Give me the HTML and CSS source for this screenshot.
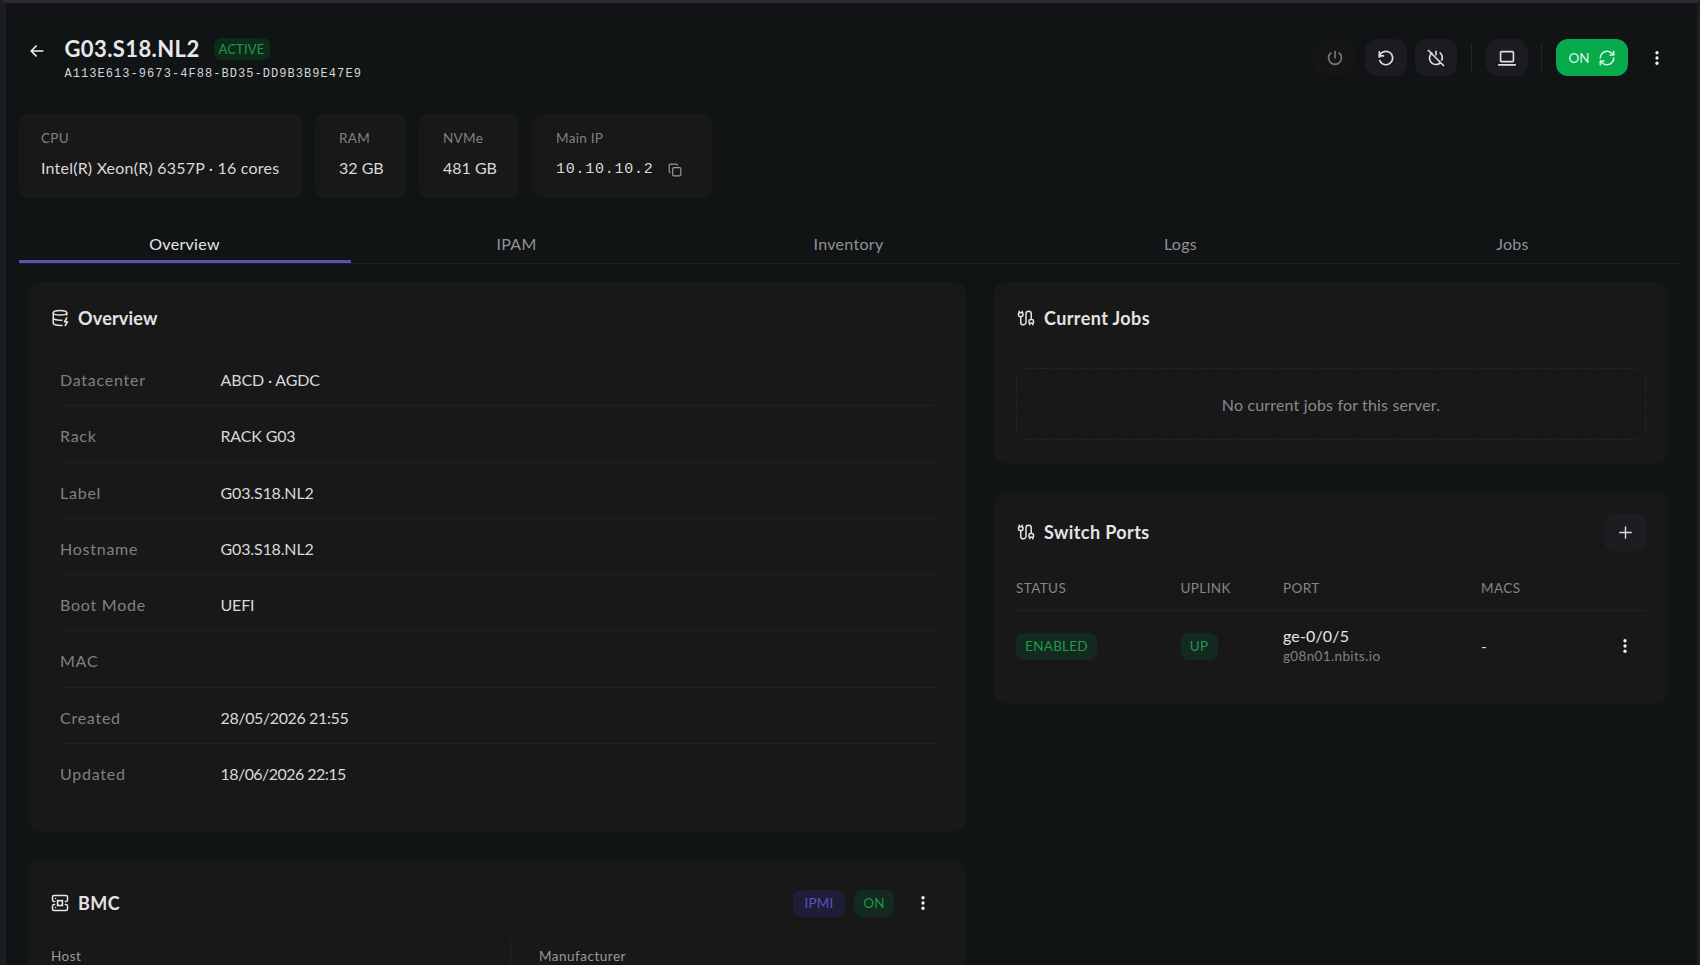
FILE: index.html
```html
<!DOCTYPE html>
<html lang="en">
<head>
<meta charset="utf-8">
<title>G03.S18.NL2</title>
<link rel="stylesheet" href="styles.css">
</head>
<body>
<svg class="sprite" aria-hidden="true">
  <symbol id="cable" viewBox="0 0 24 24"><path d="M17 19a1 1 0 0 1-1-1v-2a2 2 0 0 1 2-2h2a2 2 0 0 1 2 2v2a1 1 0 0 1-1 1zM17 21v-2M19 14V6.500a1 1 0 0 0-7 0v11a1 1 0 0 1-7 0V10M21 21v-2M3 5V3M4 10a2 2 0 0 1-2-2V6a1 1 0 0 1 1-1h4a1 1 0 0 1 1 1v2a2 2 0 0 1-2 2zM7 5V3"/></symbol>
  <symbol id="dots" viewBox="0 0 24 24"><g fill="currentColor" stroke="none"><circle cx="12" cy="5" r="2.200"/><circle cx="12" cy="12" r="2.200"/><circle cx="12" cy="19" r="2.200"/></g></symbol>
</svg>
<div class="page">
  <header class="header">
    <svg class="icon back" viewBox="0 0 24 24"><path d="M5 12h14M5 12l6 6M5 12l6-6"/></svg>
    <div class="heading">
      <div class="title-row"><h1 class="title">G03.S18.NL2</h1><span class="badge badge-active">ACTIVE</span></div>
      <div class="uuid">A113E613-9673-4F88-BD35-DD9B3B9E47E9</div>
    </div>
    <div class="actions">
      <button class="btn disabled"><svg class="icon" viewBox="0 0 24 24"><path d="M7 6a7.750 7.750 0 1 0 10 0M12 4v8"/></svg></button>
      <button class="btn"><svg class="icon" viewBox="0 0 24 24"><path d="M19.950 11a8 8 0 1 0-.5 4" transform="matrix(-1 0 0 1 24 0)"/><path d="M4 4.500v5h5"/></svg></button>
      <button class="btn"><svg class="icon" viewBox="0 0 24 24"><path d="M3 3l18 18M7 6a7.750 7.750 0 1 0 10 12M18.900 14.500A7.750 7.750 0 0 0 17 6M12 4v4"/></svg></button>
      <span class="divider"></span>
      <button class="btn"><svg class="icon laptop" viewBox="0 0 24 24"><path d="M3 19.500h18M5 6a1 1 0 0 1 1-1h12a1 1 0 0 1 1 1v9a1 1 0 0 1-1 1H6a1 1 0 0 1-1-1z"/></svg></button>
      <span class="divider"></span>
      <button class="btn btn-on"><span>ON</span><svg class="icon" viewBox="0 0 24 24"><path d="M3 12a9 9 0 0 1 9-9 9.750 9.750 0 0 1 6.740 2.740L21 8M21 3v5h-5M21 12a9 9 0 0 1-9 9 9.750 9.750 0 0 1-6.740-2.740L3 16M8 16H3v5"/></svg></button>
      <svg class="icon more"><use href="#dots"/></svg>
    </div>
  </header>

  <section class="stats">
    <div class="stat stat-cpu"><span class="stat-label">CPU</span><span class="stat-value">Intel(R) Xeon(R) 6357P · 16 cores</span></div>
    <div class="stat stat-ram"><span class="stat-label">RAM</span><span class="stat-value">32 GB</span></div>
    <div class="stat stat-nvme"><span class="stat-label">NVMe</span><span class="stat-value">481 GB</span></div>
    <div class="stat stat-ip"><span class="stat-label">Main IP</span><span class="stat-value ip"><span>10.10.10.2</span><svg class="icon copy" viewBox="0 0 24 24"><rect x="8" y="8" width="14" height="14" rx="2"/><path d="M4 16c-1.100 0-2-.9-2-2V4c0-1.100.9-2 2-2h10c1.100 0 2 .9 2 2"/></svg></span></div>
  </section>

  <nav class="tabs">
    <a class="tab tab-selected">Overview</a><a class="tab">IPAM</a><a class="tab">Inventory</a><a class="tab">Logs</a><a class="tab">Jobs</a>
  </nav>

  <main class="columns">
    <div class="column">
      <section class="card overview">
        <div class="card-head"><svg class="icon" viewBox="0 0 24 24"><ellipse cx="12" cy="5" rx="9" ry="3"/><path d="M3 5v14a9 3 0 0 0 12 2.840M21 5v3M21 12l-3 5h4l-3 5M3 12a9 3 0 0 0 11.590 2.870"/></svg><h2>Overview</h2></div>
        <dl class="details">
          <div class="row"><dt>Datacenter</dt><dd>ABCD · AGDC</dd></div>
          <div class="row"><dt>Rack</dt><dd>RACK G03</dd></div>
          <div class="row"><dt>Label</dt><dd>G03.S18.NL2</dd></div>
          <div class="row"><dt>Hostname</dt><dd>G03.S18.NL2</dd></div>
          <div class="row"><dt>Boot Mode</dt><dd>UEFI</dd></div>
          <div class="row"><dt>MAC</dt><dd></dd></div>
          <div class="row"><dt>Created</dt><dd class="date">28/05/2026 21:55</dd></div>
          <div class="row"><dt>Updated</dt><dd class="date date-updated">18/06/2026 22:15</dd></div>
        </dl>
      </section>
      <section class="card bmc">
        <div class="card-head"><svg class="icon" viewBox="0 0 24 24"><path d="M5 10H4a2 2 0 0 1-2-2V4a2 2 0 0 1 2-2h16a2 2 0 0 1 2 2v4a2 2 0 0 1-2 2h-1M5 14H4a2 2 0 0 0-2 2v4a2 2 0 0 0 2 2h16a2 2 0 0 0 2-2v-4a2 2 0 0 0-2-2h-1M6 6h.01M6 18h.01"/><circle cx="12" cy="12" r="3.500"/><path d="M8.500 8.500l1 1M14.500 14.500l1 1M15.500 8.500l-1 1M9.500 14.500l-1 1"/></svg><h2>BMC</h2>
          <div class="head-actions"><span class="badge badge-ipmi">IPMI</span><span class="badge badge-on">ON</span><svg class="icon more"><use href="#dots"/></svg></div></div>
        <div class="facts"><span class="fact">Host</span><span class="fact">Manufacturer</span></div>
      </section>
    </div>
    <div class="column">
      <section class="card jobs">
        <div class="card-head"><svg class="icon"><use href="#cable"/></svg><h2>Current Jobs</h2></div>
        <div class="empty">No current jobs for this server.</div>
      </section>
      <section class="card ports">
        <div class="card-head"><svg class="icon"><use href="#cable"/></svg><h2>Switch Ports</h2>
          <button class="btn btn-add"><svg class="icon" viewBox="0 0 24 24"><path d="M12 4v16M4 12h16"/></svg></button></div>
        <div class="grid grid-head"><span>STATUS</span><span>UPLINK</span><span>PORT</span><span>MACS</span></div>
        <div class="grid grid-row"><span><span class="badge badge-enabled">ENABLED</span></span><span><span class="badge badge-up">UP</span></span><span class="port"><span class="port-name">ge-0/0/5</span><span class="port-host">g08n01.nbits.io</span></span><span>-</span><svg class="icon more"><use href="#dots"/></svg></div>
      </section>
    </div>
  </main>
</div>
</body>
</html>
```

FILE: styles.css
```css
* { box-sizing: border-box; }
body {
  margin: 0;
  height: 965px;
  overflow: hidden;
  background: #111415;
  color: #d8d8da;
  font-family: Lato, "Open Sans", sans-serif;
  font-size: 16px;
  line-height: 20px;
}
h1, h2, dl, dd { margin: 0; }
.sprite { position: absolute; width: 0; height: 0; }
.page {
  height: 965px;
  overflow: hidden;
  border-top: 3px solid #2a2b36;
  border-left: 6px solid #1b1f24;
  border-right: 3px solid #1b1f22;
  padding: 0 18px 0 13px;
  background: linear-gradient(#121214 14px, #111415 20px);
}
.icon {
  display: block;
  flex: none;
  width: 18px;
  height: 18px;
  fill: none;
  stroke: currentColor;
  stroke-width: 2;
  stroke-linecap: round;
  stroke-linejoin: round;
}
.header { display: flex; height: 111px; padding-top: 34px; }
.back { width: 20px; height: 20px; margin: 4px 0 0 8px; color: #f0f0f0; }
.heading { margin-left: 17.500px; }
.title-row { display: flex; align-items: center; height: 24px; }
.title { width: 135px; font-size: 22px; line-height: 24px; font-weight: 700; letter-spacing: .4px; color: #e8e8ea; white-space: nowrap; }
.uuid { margin-top: 4px; font: 12px/18px "Liberation Mono", monospace; letter-spacing: 1.060px; color: #d5d5d8; white-space: nowrap; }
.badge {
  display: inline-flex;
  align-items: center;
  justify-content: center;
  height: 27px;
  border-radius: 8px;
  font-size: 13.500px;
  letter-spacing: .2px;
  background: #142a1e;
  color: #1f9850;
}
.badge-active { width: 56px; height: 22px; margin-left: 14px; border-radius: 7px; background: #0e2b1a; font-size: 13px; }
.actions { display: flex; align-items: center; margin-left: auto; height: 37px; margin-top: 2px; }
.btn {
  display: flex;
  align-items: center;
  justify-content: center;
  gap: 8px;
  width: 42px;
  height: 37px;
  padding: 0;
  margin-right: 8.500px;
  border: 0;
  border-radius: 12px;
  background: #1c1b1f;
  color: #dededf;
  font: 13.500px/20px Lato, sans-serif;
}
.btn .icon { width: 20px; height: 20px; }
.btn .laptop { width: 22px; height: 22px; stroke-width: 1.800; }
.disabled { background: #151518; color: #77777a; }
.divider { width: 1px; height: 28px; margin: 0 14px 0 5px; background: #252628; }
.btn-on { width: 72px; margin-right: 20px; background: #08ab4c; color: #d9f7e4; }
.btn-on .icon { width: 18px; height: 18px; }
.more { width: 18px; height: 18px; color: #f2f2f2; }
.actions .more { margin-right: 13px; }
.stats { display: flex; gap: 13px; height: 84px; }
.stat { display: flex; flex-direction: column; gap: 10px; padding: 15px 0 0 22px; border-radius: 9px; background: #181818; white-space: nowrap; }
.stat-label { font-size: 13.500px; line-height: 18px; color: #808084; letter-spacing: .3px; }
.stat-value { line-height: 22px; }
.stat-cpu { width: 283px; }
.stat-cpu .stat-value { letter-spacing: .21px; }
.stat-ram { width: 91px; padding-left: 24px; }
.stat-nvme { width: 100px; padding-left: 24px; }
.stat-ip { width: 180px; padding-left: 24px; }
.ip { display: flex; align-items: center; height: 22px; font: 15px/22px "Liberation Mono", monospace; letter-spacing: .75px; }
.ip span { padding-top: 4px; }
.copy { width: 14px; height: 14px; margin: 4px 0 0 14px; color: #9a9a9c; }
.tabs { display: flex; width: 1660px; height: 66px; border-bottom: 1px solid #1e1f20; }
.tab { flex: 1; display: flex; justify-content: center; padding-top: 36px; height: 65px; padding-right: 1px; color: #919194; letter-spacing: .3px; }
.tab-selected { color: #e6e6e8; border-bottom: 3px solid #5552b0; }
.columns { display: grid; grid-template-columns: 938px 674px; gap: 28px; padding: 18px 0 0 9px; }
.column { display: flex; flex-direction: column; gap: 29px; }
.card { border-radius: 12px; background: #181818; padding: 0 22px; }
.card-head { display: flex; align-items: center; gap: 9px; height: 36px; color: #e4e4e6; }
.card-head h2 { font-size: 18px; line-height: 24px; font-weight: 700; letter-spacing: .4px; }
.card-head > .icon { margin-left: 1px; }
.overview { height: 549px; padding-top: 18px; }
.overview h2 { letter-spacing: .2px; }
.details { padding: 14px 10px 0 10px; }
.row { display: grid; grid-template-columns: 160.500px 1fr; height: 56.250px; padding-top: 20px; border-bottom: 1px solid #222223; }
.row:last-child { border: 0; }
.row dt { color: #808083; letter-spacing: .75px; }
.row dd { letter-spacing: -.15px; }
.row .date { letter-spacing: -.38px; }
.row .date-updated { letter-spacing: -.55px; }
.bmc { height: 180px; padding: 25px 23px 0; }
.bmc .card-head > .icon { margin-left: 0; }
.head-actions { display: flex; align-items: center; margin-left: auto; }
.badge-ipmi { width: 52px; margin-right: 9px; background: #1e1e38; color: #5552c4; }
.badge-on { width: 40px; }
.head-actions .more { margin: 0 11px 0 20px; }
.facts { display: grid; grid-template-columns: 459px 1fr; padding-top: 18px; }
.fact { height: 80px; padding-top: 7px; font-size: 13.500px; line-height: 20px; color: #99999c; letter-spacing: .5px; }
.fact + .fact { border-left: 1px solid #232324; padding-left: 28px; }
.jobs { height: 181px; padding-top: 18px; }
.empty { display: flex; align-items: center; justify-content: center; height: 72px; margin-top: 32px; padding-top: 1px; border: 1px dashed #262628; border-radius: 9px; color: #8a8a8e; letter-spacing: .16px; }
.ports { height: 211px; padding-top: 22px; }
.btn-add { margin: 0 0 0 auto; border-radius: 9px; background: #1d1c21; }
.btn-add .icon { width: 17px; height: 17px; }
.grid { display: grid; grid-template-columns: 164.500px 102.500px 198px 1fr 18px; align-items: center; }
.grid-head { height: 61px; padding-top: 15px; border-bottom: 1px solid #222223; font-size: 13.500px; color: #858589; letter-spacing: .4px; }
.grid-row { height: 70px; margin-right: 12px; }
.badge-enabled { width: 81px; }
.badge-up { width: 37px; }
.port { display: flex; flex-direction: column; }
.port-name { color: #e6e6e8; letter-spacing: .15px; }
.port-host { font-size: 13.500px; color: #808084; letter-spacing: .35px; }
```
